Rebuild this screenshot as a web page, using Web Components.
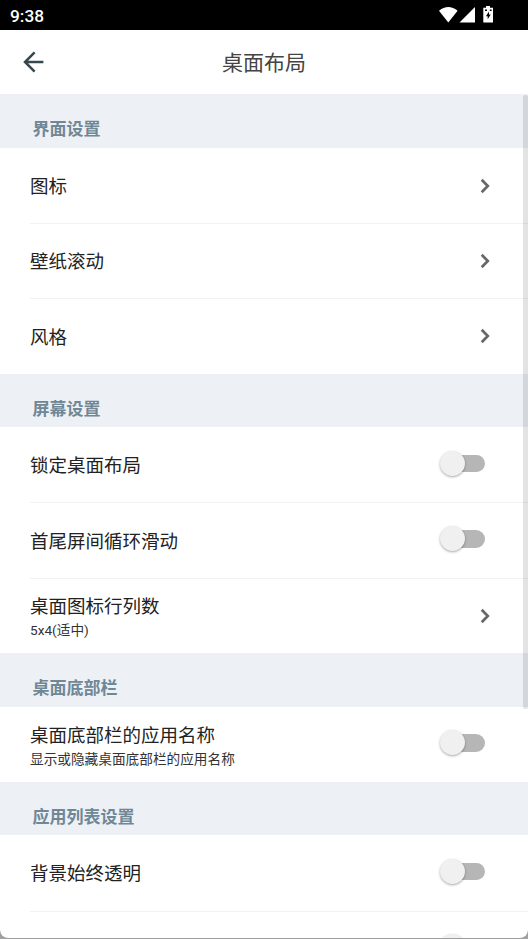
<!DOCTYPE html>
<html lang="zh-CN">
<head>
<meta charset="utf-8">
<title>桌面布局</title>
<style>
html, body { margin: 0; height: 100%; overflow: hidden; background: #a2a2a2; }
body { font-family: Roboto, "Noto Sans CJK SC", sans-serif; }
</style>
</head>
<body>
<settings-screen>
  <status-bar slot="top">9:38</status-bar>
  <title-bar slot="top">桌面布局</title-bar>
  <settings-group label="界面设置">
    <settings-row>图标<chevron-icon slot="end"></chevron-icon></settings-row>
    <settings-row>壁纸滚动<chevron-icon slot="end"></chevron-icon></settings-row>
    <settings-row>风格<chevron-icon slot="end"></chevron-icon></settings-row>
  </settings-group>
  <settings-group label="屏幕设置">
    <settings-row>锁定桌面布局<toggle-switch slot="end"></toggle-switch></settings-row>
    <settings-row>首尾屏间循环滑动<toggle-switch slot="end"></toggle-switch></settings-row>
    <settings-row>桌面图标行列数<span slot="detail">5x4(适中)</span><chevron-icon slot="end"></chevron-icon></settings-row>
  </settings-group>
  <settings-group label="桌面底部栏">
    <settings-row>桌面底部栏的应用名称<span slot="detail">显示或隐藏桌面底部栏的应用名称</span><toggle-switch slot="end"></toggle-switch></settings-row>
  </settings-group>
  <settings-group label="应用列表设置">
    <settings-row>背景始终透明<toggle-switch slot="end"></toggle-switch></settings-row>
    <settings-row><toggle-switch slot="end"></toggle-switch></settings-row>
  </settings-group>
</settings-screen>
<script>
function define(name, html) {
  const template = document.createElement('template');
  template.innerHTML = html;
  customElements.define(name, class extends HTMLElement {
    constructor() {
      super();
      this.attachShadow({ mode: 'open' }).append(template.content.cloneNode(true));
    }
    connectedCallback() {
      const label = this.shadowRoot.querySelector('.label');
      if (label && this.hasAttribute('label')) label.textContent = this.getAttribute('label');
    }
  });
}

define('settings-screen', `<style>
  :host { display: flex; flex-direction: column; position: relative; box-sizing: border-box; height: 938px; overflow: hidden; background: #fff; border-radius: 0 0 8px 8px; box-shadow: 0 0 1px #777; }
  .list { flex: 1; min-height: 0; overflow: hidden; }
  .thumb { position: absolute; right: 0; top: 95px; width: 5px; height: 614px; border-radius: 2px; background: rgba(0,0,0,.11); }
</style><slot name="top"></slot><div class="list"><slot></slot></div><div class="thumb"></div>`);

define('status-bar', `<style>
  :host { display: flex; flex: none; align-items: center; box-sizing: border-box; height: 30px; padding: 2px 34px 0 10px; background: #000; color: #fff; font-size: 17.3px; font-weight: 500; line-height: 28px; }
  .icons { display: flex; margin-left: auto; height: 28px; }
</style><span><slot></slot></span>
<div class="icons"><svg width="56" height="28" viewBox="438 2 56 28" fill="#fff">
  <path d="M439 10.7Q448.3 3.2 457.6 10.7L448.3 22.5Z"/>
  <path d="M459.5 22.6L475 7V22.6Z"/>
  <path d="M486 6H490V7.8H493V22.4H483.3V7.8H486Z"/>
  <path fill="#000" d="M489 11.6L485.9 16.2H487.7V19.2L490.7 14.4H489ZM485 9.6H487V11H485ZM489.8 9.6H491.6V11H489.8Z"/>
</svg></div>`);

define('title-bar', `<style>
  :host { display: grid; grid-template-columns: 66px 1fr 66px; flex: none; align-items: center; height: 64.4px; color: #444; font-size: 21px; line-height: 30px; }
  svg { display: block; margin-left: 22px; }
  .title { text-align: center; padding-top: 2px; }
</style><svg width="24" height="24" viewBox="0 0 24 24" fill="none" stroke="#37474f" stroke-width="2.5"><path d="M12.6 2.4L3 12L12.6 21.6M2.6 12H21.4"/></svg><div class="title"><slot></slot></div>`);

define('settings-group', `<style>
  :host { display: block; }
  .label { box-sizing: border-box; height: 53.4px; padding: 22px 0 0 32.5px; background: #edf1f6; color: #708796; font-size: 17px; font-weight: 700; line-height: 26px; }
  ::slotted(:last-child) { --rule: transparent; }
</style><div class="label"></div><slot></slot>`);

define('settings-row', `<style>
  :host { display: flex; height: 75.33px; padding-left: 30px; }
  .row { display: flex; flex: 1; align-items: center; justify-content: space-between; box-sizing: border-box; padding: 0.5px 37px 0 0; box-shadow: 0 1px var(--rule, #f2f2f2); color: #222; }
  .text { font-size: 18.5px; line-height: 26px; padding-top: 2.4px; }
  ::slotted([slot=detail]) { display: block; font-size: 13.67px; line-height: 20px; margin-top: 0; color: #333; }
</style><div class="row"><div class="text"><slot></slot><slot name="detail"></slot></div><slot name="end"></slot></div>`);

define('chevron-icon', `<style>
  :host { display: block; }
  svg { display: block; }
</style><svg width="12" height="18" viewBox="0 0 12 18" fill="none" stroke="#686868" stroke-width="2.7"><path d="M2.7 2.7L8.8 9L2.7 15.3"/></svg>`);

define('toggle-switch', `<style>
  :host { display: flex; align-items: center; width: 45px; height: 26px; margin: 0 5.6px 3px 0; }
  .track { display: flex; align-items: center; width: 38.6px; height: 17.5px; margin-left: auto; border-radius: 9px; background: #b6b6b6; }
  .knob { flex: none; width: 25px; height: 25px; margin-left: -6.6px; border-radius: 50%; background: #f0f0f0; box-shadow: 0 1px 2.5px rgba(0,0,0,.35); }
</style><div class="track"><div class="knob"></div></div>`);
</script>
</body>
</html>
